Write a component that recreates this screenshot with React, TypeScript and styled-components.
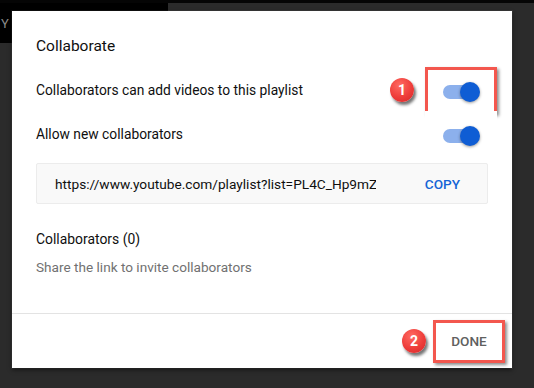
import styled, { createGlobalStyle } from 'styled-components';

const GlobalStyle = createGlobalStyle`
    html, body {
        margin: 0;
        padding: 0;
        background: #2b2b2b;
    }
    * {
        box-sizing: border-box;
    }
`;

export default function App() {
    return (
        <>
            <GlobalStyle />
            <Page>
                <BackTop>
                    <BackLogo>
                        <span>Y</span>
                    </BackLogo>
                </BackTop>
                <Dialog>
                    <Body>
                        <Title>Collaborate</Title>
                        <SettingRow>
                            <Label>Collaborators can add videos to this playlist</Label>
                            <Controls $gap={11}>
                                <Badge>1</Badge>
                                <Marker $marked $w={72} $h={47}>
                                    <Switch />
                                </Marker>
                            </Controls>
                        </SettingRow>
                        <SettingRow>
                            <Label>Allow new collaborators</Label>
                            <Controls $gap={11}>
                                <Marker $w={72} $h={47}>
                                    <Switch />
                                </Marker>
                            </Controls>
                        </SettingRow>
                        <LinkBox>
                            <LinkText>https://www.youtube.com/playlist?list=PL4C_Hp9mZ</LinkText>
                            <CopyButton>COPY</CopyButton>
                        </LinkBox>
                        <SubHeading>Collaborators (0)</SubHeading>
                        <Hint>Share the link to invite collaborators</Hint>
                    </Body>
                    <Footer>
                        <Controls $gap={7}>
                            <Badge>2</Badge>
                            <Marker $marked $w={72} $h={43}>
                                <DoneButton>DONE</DoneButton>
                            </Marker>
                        </Controls>
                    </Footer>
                </Dialog>
            </Page>
        </>
    );
}

function Switch() {
    return (
        <SwitchWrap>
            <Track />
            <Knob />
        </SwitchWrap>
    );
}

const Page = styled.div`
    position: relative;
    width: 534px;
    height: 388px;
    overflow: hidden;
    background: #2b2b2b;
    font-family: Roboto, 'Liberation Sans', Arial, sans-serif;
    border-top: 3px solid #050505;
`;

const BackTop = styled.div`
    display: flex;
    height: 40px;
`;

const BackLogo = styled.div`
    width: 168px;
    background: #000;
    display: flex;
    align-items: center;
    padding-left: 1px;
    color: #8a8a8a;
    font-size: 13px;
`;

const Dialog = styled.div`
    position: absolute;
    left: 12px;
    top: 8px;
    width: 500px;
    height: 357px;
    background: #fff;
    display: flex;
    flex-direction: column;
    box-shadow: 0 2px 4px rgba(0, 0, 0, 0.5), 0 0 0 1px rgba(255, 255, 255, 0.06);
`;

const Body = styled.div`
    flex: 1;
    padding: 23px 24px 0;
    display: flex;
    flex-direction: column;
    border-bottom: 1px solid #e3e3e3;
`;

const Title = styled.div`
    font-size: 15.5px;
    line-height: 24px;
    color: #0f0f0f;
    margin-bottom: 10px;
`;

const SettingRow = styled.div`
    height: 44px;
    display: flex;
    align-items: center;
    justify-content: space-between;
`;

const Label = styled.div`
    font-size: 13.8px;
    color: #0f0f0f;
`;

const Controls = styled.div<{ $gap: number }>`
    display: flex;
    align-items: center;
    gap: ${(p) => p.$gap}px;
    margin-right: -9px;
`;

const Marker = styled.div<{ $marked?: boolean; $w: number; $h: number }>`
    width: ${(p) => p.$w}px;
    height: ${(p) => p.$h}px;
    display: flex;
    align-items: center;
    justify-content: center;
    border: 3px solid ${(p) => (p.$marked ? '#f3574e' : 'transparent')};
    box-shadow: ${(p) => (p.$marked ? '2px 2px 3px rgba(0, 0, 0, 0.45)' : 'none')};
    background: #fff;
`;

const Badge = styled.div`
    width: 24px;
    height: 24px;
    border-radius: 50%;
    background: radial-gradient(circle at 40% 30%, #ff6a62 0%, #ee3d3a 55%, #d5262a 100%);
    box-shadow: 2px 3px 3px rgba(0, 0, 0, 0.55);
    color: #fff;
    font-weight: 700;
    font-size: 14px;
    display: flex;
    align-items: center;
    justify-content: center;
    line-height: 1;
`;

const SwitchWrap = styled.div`
    position: relative;
    width: 37px;
    height: 20px;
    margin-top: 3px;
`;

const Track = styled.div`
    position: absolute;
    left: 0;
    top: 3px;
    width: 34px;
    height: 14px;
    border-radius: 7px;
    background: #8cb0ec;
`;

const Knob = styled.div`
    position: absolute;
    left: 17px;
    top: 0;
    width: 20px;
    height: 20px;
    border-radius: 50%;
    background: #0f5dd4;
    box-shadow: 0 1px 3px rgba(0, 0, 0, 0.4);
`;

const LinkBox = styled.div`
    margin-top: 7px;
    height: 41px;
    display: flex;
    align-items: center;
    justify-content: space-between;
    padding: 0 27px 0 18px;
    background: #f9f9f9;
    border: 1px solid #ececec;
    border-radius: 2px;
`;

const LinkText = styled.div`
    width: 321px;
    overflow: hidden;
    white-space: nowrap;
    font-size: 13.7px;
    color: #0f0f0f;
`;

const CopyButton = styled.div`
    font-size: 13.6px;
    font-weight: 500;
    color: #1565d6;
`;

const SubHeading = styled.div`
    margin-top: 23px;
    font-size: 13.9px;
    line-height: 24px;
    color: #0f0f0f;
`;

const Hint = styled.div`
    margin-top: 4px;
    font-size: 13.6px;
    line-height: 24px;
    color: #717171;
`;

const Footer = styled.div`
    height: 54px;
    display: flex;
    align-items: center;
    justify-content: flex-end;
    padding-right: 16px;
`;

const DoneButton = styled.div`
    font-size: 13.6px;
    font-weight: 500;
    color: #606060;
`;
